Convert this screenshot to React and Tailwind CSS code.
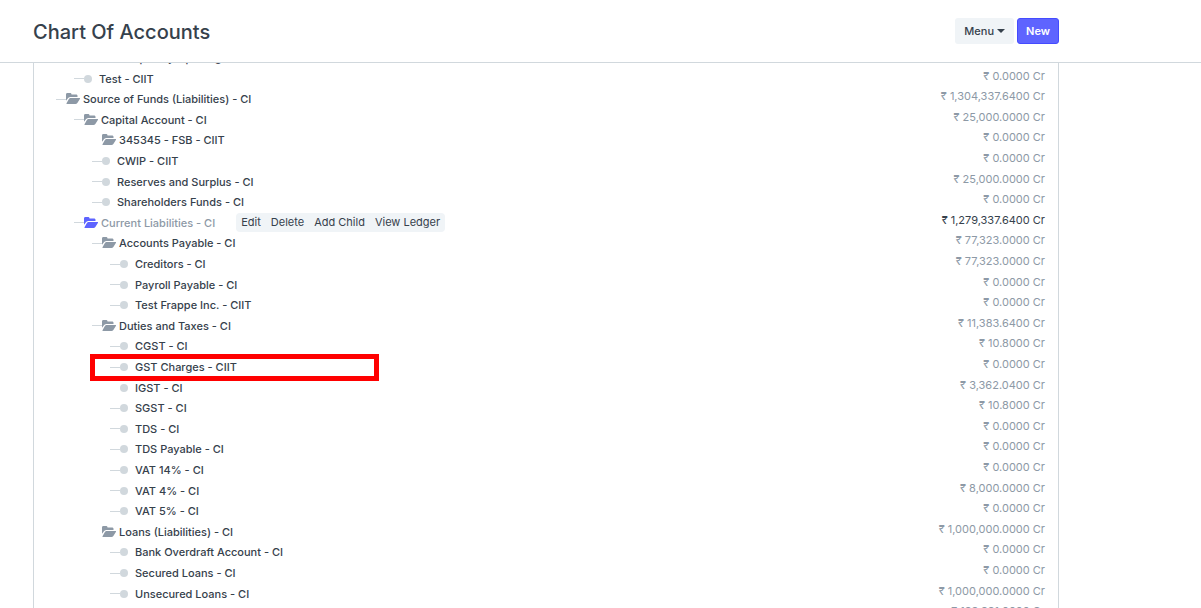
const accounts = [
  { name: 'Temporary Opening - CI', level: 3 },
  { name: 'Test - CIIT', level: 2, balance: '0.0000' },
  { name: 'Source of Funds (Liabilities) - CI', level: 1, group: true, balance: '1,304,337.6400' },
  { name: 'Capital Account - CI', level: 2, group: true, balance: '25,000.0000' },
  { name: '345345 - FSB - CIIT', level: 3, group: true, noLine: true, balance: '0.0000' },
  { name: 'CWIP - CIIT', level: 3, balance: '0.0000' },
  { name: 'Reserves and Surplus - CI', level: 3, balance: '25,000.0000' },
  { name: 'Shareholders Funds - CI', level: 3, balance: '0.0000' },
  { name: 'Current Liabilities - CI', level: 2, group: true, selected: true, balance: '1,279,337.6400' },
  { name: 'Accounts Payable - CI', level: 3, group: true, balance: '77,323.0000' },
  { name: 'Creditors - CI', level: 4, balance: '77,323.0000' },
  { name: 'Payroll Payable - CI', level: 4, balance: '0.0000' },
  { name: 'Test Frappe Inc. - CIIT', level: 4, balance: '0.0000' },
  { name: 'Duties and Taxes - CI', level: 3, group: true, balance: '11,383.6400' },
  { name: 'CGST - CI', level: 4, balance: '10.8000' },
  { name: 'GST Charges - CIIT', level: 4, marked: true, balance: '0.0000' },
  { name: 'IGST - CI', level: 4, noLine: true, balance: '3,362.0400' },
  { name: 'SGST - CI', level: 4, balance: '10.8000' },
  { name: 'TDS - CI', level: 4, balance: '0.0000' },
  { name: 'TDS Payable - CI', level: 4, balance: '0.0000' },
  { name: 'VAT 14% - CI', level: 4, balance: '0.0000' },
  { name: 'VAT 4% - CI', level: 4, balance: '8,000.0000' },
  { name: 'VAT 5% - CI', level: 4, balance: '0.0000' },
  { name: 'Loans (Liabilities) - CI', level: 3, group: true, noLine: true, balance: '1,000,000.0000' },
  { name: 'Bank Overdraft Account - CI', level: 4, balance: '0.0000' },
  { name: 'Secured Loans - CI', level: 4, balance: '0.0000' },
  { name: 'Unsecured Loans - CI', level: 4, balance: '1,000,000.0000' },
  { name: 'Stock Liabilities - CI', level: 3, group: true, balance: '188,881.0000' },
]

const indent = {
  1: 'pl-[22px]',
  2: 'pl-[40px]',
  3: 'pl-[58px]',
  4: 'pl-[76px]',
}

const actions = ['Edit', 'Delete', 'Add Child', 'View Ledger']

function FolderOpen({ className }) {
  return (
    <svg viewBox="0 0 28 22" className={className} fill="currentColor" aria-hidden="true">
      <path d="M0 3C0 1 1 0 3 0H8c2 0 3 1 3 3H20c2 0 3 1 3 3V8H9.500C7 8 5 9 3.500 11L0 15.500z" />
      <path d="M9.500 10H26.500c1.500 0 2 1 1.200 2.200l-5 7.600C21.700 21.200 20.500 22 19 22H2.500C1 22 .5 21 1.300 19.800L5.500 12.500C6.500 11 8 10 9.500 10z" />
    </svg>
  )
}

function AccountRow({ account }) {
  const { name, level, group, noLine, selected, marked, balance } = account

  return (
    <li className={`relative flex h-[21px] shrink-0 items-center pr-[13px] nth-[5n+2]:h-5 nth-[5n+4]:h-5 ${indent[level]}`}>
      <span className={`mb-px h-px w-[10px] shrink-0 ${noLine ? '' : 'bg-[#d1d8dd]'}`} />
      <button type="button" className="flex items-center whitespace-nowrap">
        {group ? (
          <FolderOpen className={`mr-[3px] mb-0.5 h-[11px] w-[14px] ${selected ? 'text-[#5e64ff]' : 'text-[#8d99a6]'}`} />
        ) : (
          <span className="mr-[7px] mb-px size-2 rounded-full bg-[#d1d8dd]" />
        )}
        <span className={selected ? 'text-[#8d99a6]' : 'text-[#36414c]'}>{name}</span>
      </button>

      {selected && (
        <div className="mb-0.5 ml-[21px] flex gap-[10px] rounded-sm bg-[#f0f4f7] px-[5px] font-normal whitespace-nowrap text-[#36414c]">
          {actions.map((action) => (
            <button key={action} type="button" className="h-[19px]">
              {action}
            </button>
          ))}
        </div>
      )}

      {balance && (
        <span className={`mb-1.5 ml-auto font-normal whitespace-nowrap ${selected ? 'text-[#36414c]' : 'text-[#8d99a6]'}`}>
          ₹ {balance} Cr
        </span>
      )}

      {marked && (
        <span className="pointer-events-none absolute -top-[3px] left-14 h-[27px] w-[289px] border-[5px] border-[#ff0000]" />
      )}
    </li>
  )
}

export default function App() {
  return (
    <div className="flex h-screen flex-col overflow-hidden bg-white font-['Inter','Liberation_Sans',sans-serif] text-[11px] font-medium text-[#36414c]">
      <header className="shrink-0 border-b border-[#d1d8dd] pr-[142px] pl-[33px]">
        <div className="flex h-[62px] items-center justify-between">
          <h1 className="pt-0.5 text-xl">Chart Of Accounts</h1>
          <div className="flex gap-[3px]">
            <button type="button" className="flex h-[26px] items-center gap-[3px] rounded-[3px] bg-[#f0f4f7] px-[9px]">
              Menu
              <span className="border-x-4 border-t-4 border-x-transparent border-t-[#36414c]" />
            </button>
            <button
              type="button"
              className="h-[26px] rounded-[3px] border border-[#444bff] bg-[#5e64ff] px-2 font-semibold text-white"
            >
              New
            </button>
          </div>
        </div>
      </header>

      <main className="flex min-h-0 flex-1 flex-col overflow-hidden pr-[142px] pl-[33px]">
        <div className="min-h-0 flex-1 overflow-hidden border-x border-[#d1d8dd]">
          <ul className="-mt-[15px] flex flex-col">
            {accounts.map((account) => (
              <AccountRow key={account.name} account={account} />
            ))}
          </ul>
        </div>
      </main>
    </div>
  )
}
